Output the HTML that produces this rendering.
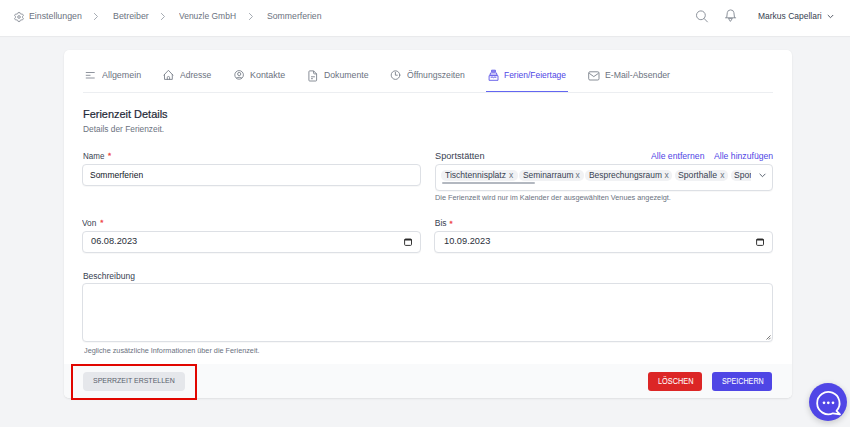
<!DOCTYPE html>
<html><head><meta charset="utf-8">
<style>
*{margin:0;padding:0;box-sizing:border-box}
html,body{width:850px;height:427px;overflow:hidden;background:#f3f4f6;font-family:"Liberation Sans",sans-serif}
.a{position:absolute}
.t{position:absolute;line-height:1;white-space:nowrap;transform-origin:0 0;display:inline-block}
.hdr{left:0;top:0;width:850px;height:35.5px;background:#fff;box-shadow:0 1px 1px rgba(0,0,0,0.04)}
.card{left:64px;top:50px;width:727.6px;height:347.6px;background:#fff;border-radius:5px;box-shadow:0 1px 2px rgba(0,0,0,0.08),0 0 1px rgba(0,0,0,0.06);overflow:hidden}
.foot{left:0;top:314px;width:728px;height:34px;background:#f9fafb}
.inp{border:1px solid #dde0e5;border-radius:4px;background:#fff;box-shadow:0 1px 1px rgba(0,0,0,0.03)}
.tag{background:#f1f2f4;border-radius:5px;height:11px;top:169.5px}
.tx{color:#4b5563;font-size:8px}
.xx{top:171px;font-size:8.5px;line-height:1;color:#6b7280}
svg{position:absolute;overflow:visible}
</style></head><body>
<div class="a hdr"></div>
<!-- header icons -->
<svg style="left:12.6px;top:10.6px" width="12" height="12" viewBox="0 0 24 24" fill="none" stroke="#7b818b" stroke-width="1.7" stroke-linejoin="round"><path d="M9.594 3.94c.09-.542.56-.94 1.11-.94h2.593c.55 0 1.02.398 1.11.94l.213 1.281c.063.374.313.686.645.87.074.04.147.083.22.127.325.196.72.257 1.075.124l1.217-.456a1.125 1.125 0 0 1 1.37.49l1.296 2.247a1.125 1.125 0 0 1-.26 1.431l-1.003.827c-.293.241-.438.613-.43.992a7.723 7.723 0 0 1 0 .255c-.008.378.137.75.43.991l1.004.827c.424.35.534.955.26 1.430l-1.298 2.247a1.125 1.125 0 0 1-1.369.491l-1.217-.456c-.355-.133-.75-.072-1.076.124a6.47 6.47 0 0 1-.22.128c-.331.183-.581.495-.644.869l-.213 1.281c-.09.543-.56.94-1.11.94h-2.594c-.55 0-1.019-.398-1.11-.94l-.213-1.281c-.062-.374-.312-.686-.644-.87a6.52 6.52 0 0 1-.22-.127c-.325-.196-.72-.257-1.076-.124l-1.217.456a1.125 1.125 0 0 1-1.369-.49l-1.297-2.247a1.125 1.125 0 0 1 .26-1.431l1.004-.827c.292-.24.437-.613.43-.991a6.932 6.932 0 0 1 0-.255c.007-.38-.138-.751-.43-.992l-1.004-.827a1.125 1.125 0 0 1-.26-1.430l1.297-2.247a1.125 1.125 0 0 1 1.37-.491l1.216.456c.356.133.751.072 1.076-.124.072-.044.146-.086.22-.128.332-.183.582-.495.644-.869l.214-1.28Z"/><circle cx="12" cy="12" r="2.6"/></svg>
<svg style="left:93px;top:13px" width="5" height="7" viewBox="0 0 5 7" fill="none" stroke="#a0a6af" stroke-width="0.95" stroke-linecap="round"><path d="M1.4 .4L4.5 3.5L1.4 6.6"/></svg>
<svg style="left:159.5px;top:13px" width="5" height="7" viewBox="0 0 5 7" fill="none" stroke="#a0a6af" stroke-width="0.95" stroke-linecap="round"><path d="M1.4 .4L4.5 3.5L1.4 6.6"/></svg>
<svg style="left:247.5px;top:13px" width="5" height="7" viewBox="0 0 5 7" fill="none" stroke="#a0a6af" stroke-width="0.95" stroke-linecap="round"><path d="M1.4 .4L4.5 3.5L1.4 6.6"/></svg>
<svg style="left:696px;top:10.5px" width="12" height="12" viewBox="0 0 12 12" fill="none" stroke="#8d939c" stroke-width="1"><circle cx="4.9" cy="4.3" r="4.4"/><path d="M8.1 7.5l3.3 3.4" stroke-linecap="round"/></svg>
<svg style="left:724px;top:9px" width="13" height="13" viewBox="0 0 13 13" fill="none" stroke="#8d939c" stroke-width="1" stroke-linejoin="round" stroke-linecap="round"><path d="M2.7 8.6L3.3 3.6Q3.7 0.9 6.6 0.9Q9.5 0.9 9.9 3.6L10.5 8.6"/><path d="M1.5 8.8H11.7"/><path d="M4.8 9.4H8.4L6.6 12.1Z"/></svg>
<svg style="left:826.5px;top:14px" width="7" height="5" viewBox="0 0 7 5" fill="none" stroke="#555b66" stroke-width="1"><path d="M0.8 1l2.7 2.7L6.2 1"/></svg>

<div class="a card">
  <div class="a foot"></div>
</div>
<!-- tabs line -->
<div class="a" style="left:83px;top:91.6px;width:690px;height:1px;background:#eceef1"></div>
<div class="a" style="left:486px;top:90.8px;width:81.6px;height:1.5px;background:#6366f1"></div>
<!-- tab icons -->
<svg style="left:85px;top:71px" width="10" height="8" viewBox="0 0 10 8" fill="none" stroke="#7b818b" stroke-width="0.85"><path d="M0.8 1.5h8.9M0.8 4.3h4.7M0.8 7h8.9"/></svg>
<svg style="left:163px;top:69px" width="12" height="12" viewBox="0 0 12 12" fill="none" stroke="#7b818b" stroke-width="0.9" stroke-linejoin="round" stroke-linecap="round"><path d="M0.9 6.1L5.4 1.3L9.9 6.1"/><path d="M1.5 5.5V10.4H9.3V5.5"/><path d="M4.3 10.4V8.6a1.15 1.15 0 0 1 2.3 0V10.4"/></svg>
<svg style="left:234px;top:70px" width="10" height="10" viewBox="0 0 10 10" fill="none" stroke="#7b818b" stroke-width="0.9"><circle cx="5.1" cy="4.9" r="4.3"/><circle cx="5.2" cy="4.0" r="1.6"/><path d="M2.3 8.1Q5.1 6.3 7.9 8.1"/></svg>
<svg style="left:307.5px;top:69.5px" width="10" height="12" viewBox="0 0 10 12" fill="none" stroke="#7b818b" stroke-width="0.9" stroke-linejoin="round"><path d="M1.7 .9H5.6L8.6 3.9V10.2a.8 .8 0 0 1-.8 .8H1.7a.8 .8 0 0 1-.8-.8V1.7a.8 .8 0 0 1 .8-.8z"/><path d="M5.6 .9V3.1a.8 .8 0 0 0 .8 .8H8.6"/><path d="M3 6.8h3.9M3 8.7h1.9"/></svg>
<svg style="left:390px;top:70px" width="11" height="11" viewBox="0 0 11 11" fill="none" stroke="#7b818b" stroke-width="0.9" stroke-linecap="round" stroke-linejoin="round"><circle cx="5.5" cy="5.1" r="4.3"/><path d="M5.4 2.2V5.2H7.3"/></svg>
<svg style="left:487.5px;top:69px" width="11" height="12" viewBox="0 0 11 12" fill="none" stroke="#5b54e8" stroke-width="0.9" stroke-linejoin="round"><path d="M3.6 1.2H7.4V2.9H3.6z" fill="#b7b3f5"/><path d="M2.6 3.9H8.4L9.1 6.1H1.9z"/><path d="M1.1 6.7H10V11.3H1.1z"/><path d="M2.7 8.5L4.1 8 5.5 8.7 6.9 8 8.3 8.5"/></svg>
<svg style="left:588px;top:70.5px" width="12" height="10" viewBox="0 0 12 10" fill="none" stroke="#7b818b" stroke-width="0.9" stroke-linejoin="round"><rect x=".7" y=".8" width="10.3" height="8.2" rx="1.2"/><path d="M1.2 2.3L5.8 5.6 10.5 2.3"/></svg>

<!-- inputs -->
<div class="a inp" style="left:82px;top:164px;width:339px;height:22px"></div>
<div class="a inp" style="left:434.6px;top:163.5px;width:338px;height:27px;overflow:hidden"></div>
<div class="a tag" style="left:441px;width:76.5px"></div>
<div class="a tag" style="left:518.8px;width:65px"></div>
<div class="a tag" style="left:585.2px;width:87px"></div>
<div class="a tag" style="left:674.6px;width:53.3px"></div>
<div class="a tag" style="left:730.6px;width:20px;border-radius:5px 0 0 5px;overflow:hidden"><span style="position:absolute;left:3px;top:1.3px;font-size:9px;line-height:1;color:#374151;white-space:nowrap;transform:scaleX(0.95);transform-origin:0 0">Sporthalle</span></div>
<span class="a xx" style="left:509px">x</span>
<span class="a xx" style="left:575.6px">x</span>
<span class="a xx" style="left:664.6px">x</span>
<span class="a xx" style="left:720.3px">x</span>
<div class="a" style="left:441.6px;top:182.3px;width:93px;height:1.5px;background:#b3b8c0;border-radius:1px"></div>
<svg style="left:758.5px;top:172.5px" width="7" height="5" viewBox="0 0 7 5" fill="none" stroke="#4b5563" stroke-width="0.9"><path d="M0.6 .8l2.9 2.9L6.4 .8"/></svg>

<div class="a inp" style="left:82.4px;top:230.6px;width:339px;height:22px"></div>
<div class="a inp" style="left:434.4px;top:230.6px;width:338.5px;height:22px"></div>
<svg style="left:404px;top:238px" width="8" height="8" viewBox="0 0 8 8"><rect x=".6" y="1" width="6.9" height="6.4" rx="1" fill="none" stroke="#2a2a2a" stroke-width="0.95"/><rect x=".6" y="1" width="6.9" height="1.5" fill="#2a2a2a"/></svg>
<svg style="left:756px;top:238px" width="8" height="8" viewBox="0 0 8 8"><rect x=".6" y="1" width="6.9" height="6.4" rx="1" fill="none" stroke="#2a2a2a" stroke-width="0.95"/><rect x=".6" y="1" width="6.9" height="1.5" fill="#2a2a2a"/></svg>

<div class="a inp" style="left:82.2px;top:283px;width:690.5px;height:58.5px"></div>
<svg style="left:765px;top:334px" width="6" height="6" viewBox="0 0 6 6" fill="none" stroke="#555" stroke-width=".8"><path d="M5.5 1.5l-4 4M5.5 3.8L3.8 5.5"/></svg>

<!-- footer buttons -->
<div class="a" style="left:83px;top:371.5px;width:102px;height:19.5px;background:#e5e7eb;border-radius:4px"></div>
<div class="a" style="left:648.2px;top:372px;width:54px;height:19px;background:#dc2626;border-radius:3px"></div>
<div class="a" style="left:711.7px;top:372px;width:60.6px;height:19px;background:#4f46e5;border-radius:3px"></div>
<div class="a" style="left:71.2px;top:364.2px;width:126px;height:36px;border:2.6px solid #e10600"></div>

<!-- chat -->
<div class="a" style="left:809px;top:383.2px;width:38px;height:38px;border-radius:50%;background:#5046e6;box-shadow:0 2px 6px rgba(0,0,0,0.18)"></div>
<svg style="left:816px;top:390px" width="25" height="25" viewBox="0 0 25 25" fill="none" stroke="#fff" stroke-width="1.8"><path d="M20.5 20.8A11.2 11.2 0 1 0 17 23.3 L24 24.3 Z" stroke-linejoin="round"/><circle cx="8" cy="12.8" r="1.35" fill="#fff" stroke="none"/><circle cx="12.3" cy="12.8" r="1.35" fill="#fff" stroke="none"/><circle cx="17" cy="12.8" r="1.35" fill="#fff" stroke="none"/></svg>

<span id="bc1" class="t" style="left:29.30px;top:11.88px;font-size:9px;color:#6b7280;font-weight:400;transform:scaleX(0.9774);">Einstellungen</span>
<span id="bc2" class="t" style="left:112.51px;top:11.88px;font-size:9px;color:#6b7280;font-weight:400;transform:scaleX(0.9806);">Betreiber</span>
<span id="bc3" class="t" style="left:179.11px;top:11.88px;font-size:9px;color:#6b7280;font-weight:400;transform:scaleX(0.9417);">Venuzle GmbH</span>
<span id="bc4" class="t" style="left:266.54px;top:11.88px;font-size:9px;color:#6b7280;font-weight:400;transform:scaleX(0.9636);">Sommerferien</span>
<span id="user" class="t" style="left:757.53px;top:12.18px;font-size:9px;color:#374151;font-weight:400;transform:scaleX(0.9418);">Markus Capellari</span>
<span id="tb1" class="t" style="left:101.50px;top:70.98px;font-size:9px;color:#6b7280;font-weight:400;transform:scaleX(0.9897);">Allgemein</span>
<span id="tb2" class="t" style="left:179.90px;top:70.98px;font-size:9px;color:#6b7280;font-weight:400;transform:scaleX(0.9469);">Adresse</span>
<span id="tb3" class="t" style="left:249.51px;top:70.98px;font-size:9px;color:#6b7280;font-weight:400;transform:scaleX(0.9912);">Kontakte</span>
<span id="tb4" class="t" style="left:323.52px;top:70.98px;font-size:9px;color:#6b7280;font-weight:400;transform:scaleX(0.9667);">Dokumente</span>
<span id="tb5" class="t" style="left:406.71px;top:70.98px;font-size:9px;color:#6b7280;font-weight:400;transform:scaleX(0.9567);">Öffnungszeiten</span>
<span id="tb6" class="t" style="left:503.56px;top:70.98px;font-size:9px;color:#4f46e5;font-weight:400;transform:scaleX(0.9385);">Ferien/Feiertage</span>
<span id="tb7" class="t" style="left:604.53px;top:70.98px;font-size:9px;color:#6b7280;font-weight:400;transform:scaleX(0.9697);">E-Mail-Absender</span>
<span id="ti" class="t" style="left:83.29px;top:109.29px;font-size:11px;color:#1f2937;font-weight:400;transform:scaleX(0.9952);-webkit-text-stroke:0.2px #1f2937;">Ferienzeit Details</span>
<span id="st" class="t" style="left:83.30px;top:125.10px;font-size:8.5px;color:#6b7280;font-weight:400;transform:scaleX(0.9817);">Details der Ferienzeit.</span>
<span id="l1" class="t" style="left:83.14px;top:152.00px;font-size:8.5px;color:#374151;font-weight:400;transform:scaleX(0.9409);">Name</span>
<span id="l1s" class="t" style="left:108.00px;top:152.43px;font-size:8px;color:#ef4444;font-weight:400;-webkit-text-stroke:0.3px #ef4444;">*</span>
<span id="l2" class="t" style="left:434.92px;top:152.40px;font-size:8.5px;color:#374151;font-weight:400;transform:scaleX(1.0818);">Sportstätten</span>
<span id="lk1" class="t" style="left:650.50px;top:151.90px;font-size:8.5px;color:#4f46e5;font-weight:400;transform:scaleX(1.0192);">Alle entfernen</span>
<span id="lk2" class="t" style="left:713.50px;top:151.90px;font-size:8.5px;color:#4f46e5;font-weight:400;transform:scaleX(1.0172);">Alle hinzufügen</span>
<span id="v1" class="t" style="left:90.33px;top:170.78px;font-size:9px;color:#111827;font-weight:400;transform:scaleX(0.9393);">Sommerferien</span>
<span id="tg1" class="t" style="left:445.11px;top:170.78px;font-size:9px;color:#374151;font-weight:400;transform:scaleX(0.9500);">Tischtennisplatz</span>
<span id="tg2" class="t" style="left:522.53px;top:170.78px;font-size:9px;color:#374151;font-weight:400;transform:scaleX(0.9340);">Seminarraum</span>
<span id="tg3" class="t" style="left:588.56px;top:170.78px;font-size:9px;color:#374151;font-weight:400;transform:scaleX(0.9351);">Besprechungsraum</span>
<span id="tg4" class="t" style="left:678.31px;top:170.78px;font-size:9px;color:#374151;font-weight:400;transform:scaleX(0.9650);">Sporthalle</span>
<span id="h1" class="t" style="left:434.53px;top:194.05px;font-size:7.5px;color:#6b7280;font-weight:400;transform:scaleX(0.9739);">Die Ferienzeit wird nur im Kalender der ausgewählten Venues angezeigt.</span>
<span id="l3" class="t" style="left:82.20px;top:218.80px;font-size:8.5px;color:#374151;font-weight:400;transform:scaleX(0.9786);">Von</span>
<span id="l3s" class="t" style="left:100.30px;top:219.23px;font-size:8px;color:#ef4444;font-weight:400;-webkit-text-stroke:0.3px #ef4444;">*</span>
<span id="l4" class="t" style="left:434.79px;top:219.20px;font-size:8.5px;color:#374151;font-weight:400;">Bis</span>
<span id="l4s" class="t" style="left:449.40px;top:219.63px;font-size:8px;color:#ef4444;font-weight:400;-webkit-text-stroke:0.3px #ef4444;">*</span>
<span id="v3" class="t" style="left:91.29px;top:236.98px;font-size:9px;color:#2b303a;font-weight:400;transform:scaleX(1.0267);">06.08.2023</span>
<span id="v4" class="t" style="left:443.68px;top:236.98px;font-size:9px;color:#2b303a;font-weight:400;transform:scaleX(1.0273);">10.09.2023</span>
<span id="l5" class="t" style="left:82.89px;top:271.70px;font-size:8.5px;color:#374151;font-weight:400;">Beschreibung</span>
<span id="h2" class="t" style="left:83.50px;top:346.55px;font-size:7.5px;color:#6b7280;font-weight:400;transform:scaleX(0.9704);">Jegliche zusätzliche Informationen über die Ferienzeit.</span>
<span id="b1" class="t" style="left:93.12px;top:377.23px;font-size:8px;color:#59606c;font-weight:400;transform:scaleX(0.8731);">SPERRZEIT ERSTELLEN</span>
<span id="b2" class="t" style="left:658.12px;top:376.80px;font-size:8.5px;color:#ffffff;font-weight:400;transform:scaleX(0.8650);-webkit-text-stroke:0.05px #fff;">LÖSCHEN</span>
<span id="b3" class="t" style="left:721.58px;top:376.80px;font-size:8.5px;color:#ffffff;font-weight:400;transform:scaleX(0.8408);-webkit-text-stroke:0.05px #fff;">SPEICHERN</span>
</body></html>
